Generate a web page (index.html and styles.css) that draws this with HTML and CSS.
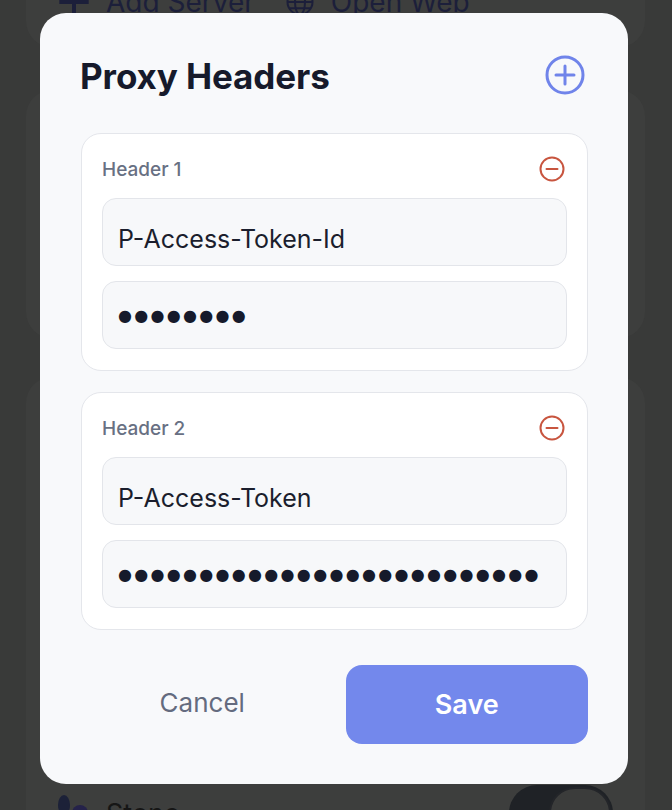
FILE: index.html
```html
<!DOCTYPE html>
<html lang="en">
<head>
    <meta charset="UTF-8">
    <meta name="viewport" content="width=device-width, initial-scale=1.0">
    <title>Proxy Headers</title>
    <link rel="stylesheet" href="styles.css">
</head>
<body>

    <!-- App behind the dialog -->
    <div class="app">
        <section class="panel panel-top">
            <div class="actions">
                <span class="action">
                    <svg width="32" height="32" viewBox="0 0 24 24"><path d="M12 1v22M1 12h22" stroke="currentColor" stroke-width="3" fill="none"/></svg>
                    Add Server
                </span>
                <span class="action">
                    <svg width="30" height="30" viewBox="0 0 24 24" fill="none" stroke="currentColor" stroke-width="1.6"><circle cx="12" cy="12" r="10"/><ellipse cx="12" cy="12" rx="4" ry="10"/><path d="M2 12h20M4 7h16M4 17h16"/></svg>
                    Open Web
                </span>
            </div>
        </section>
        <section class="panel panel-mid"></section>
        <section class="panel panel-list">
            <div class="list-row">
                <span class="row-icon"><i></i><i></i></span>
                <span class="row-name">Stone</span>
                <span class="toggle"><span class="knob"></span></span>
            </div>
        </section>
    </div>

    <!-- Dialog -->
    <div class="overlay">
        <div class="dialog">
            <div class="dialog-head">
                <h2>Proxy Headers</h2>
                <button class="icon-btn add-btn" aria-label="Add header">
                    <svg width="40" height="40" viewBox="0 0 40 40" fill="none" stroke="currentColor" stroke-width="3" stroke-linecap="round">
                        <circle cx="20" cy="20" r="18"/>
                        <path d="M20 11v18M11 20h18"/>
                    </svg>
                </button>
            </div>

            <div class="header-card">
                <div class="header-label">
                    <span>Header 1</span>
                    <button class="icon-btn remove-btn" aria-label="Remove header">
                        <svg width="26" height="26" viewBox="0 0 26 26" fill="none" stroke="currentColor" stroke-width="2" stroke-linecap="round">
                            <circle cx="13" cy="13" r="11.5"/>
                            <path d="M7.5 13h11"/>
                        </svg>
                    </button>
                </div>
                <input class="field" type="text" value="P-Access-Token-Id">
                <div class="field secret">●●●●●●●●</div>
            </div>

            <div class="header-card">
                <div class="header-label">
                    <span>Header 2</span>
                    <button class="icon-btn remove-btn" aria-label="Remove header">
                        <svg width="26" height="26" viewBox="0 0 26 26" fill="none" stroke="currentColor" stroke-width="2" stroke-linecap="round">
                            <circle cx="13" cy="13" r="11.5"/>
                            <path d="M7.5 13h11"/>
                        </svg>
                    </button>
                </div>
                <input class="field" type="text" value="P-Access-Token">
                <div class="field secret">●●●●●●●●●●●●●●●●●●●●●●●●●●</div>
            </div>

            <div class="dialog-actions">
                <button class="btn-cancel">Cancel</button>
                <button class="btn-save">Save</button>
            </div>
        </div>
    </div>

</body>
</html>
```

FILE: styles.css
```css
body {
    margin: 0;
    height: 810px;
    overflow: hidden;
    background-color: #393a39;
    font-family: Inter, "Noto Sans", sans-serif;
}

/* background app, dimmed */
.app {
    padding: 0 27px 0 26px;
}
.panel {
    background-color: #3d3e3d;
    border-radius: 26px;
}
.panel-top {
    height: 90px;
    margin-top: -43px;
    display: flex;
    align-items: flex-end;
    padding: 0 32px 28px;
    box-sizing: border-box;
}
.actions {
    display: flex;
    gap: 30px;
    color: #1c1f3a;
    font-size: 28px;
}
.action {
    display: flex;
    align-items: center;
    gap: 16px;
}
.panel-mid {
    height: 248px;
    margin-top: 43px;
}
.panel-list {
    height: 460px;
    margin-top: 39px;
    display: flex;
    flex-direction: column;
    justify-content: flex-end;
    padding: 0 32px 4px;
    box-sizing: border-box;
}
.list-row {
    display: flex;
    align-items: center;
    height: 40px;
    gap: 16px;
}
.row-icon {
    position: relative;
    width: 32px;
    height: 40px;
}
.row-icon i {
    position: absolute;
    border-radius: 50%;
    background-color: #1c2138;
}
.row-icon i:first-child {
    left: 0;
    top: 2px;
    width: 12px;
    height: 20px;
}
.row-icon i:last-child {
    left: 14px;
    top: 12px;
    width: 16px;
    height: 16px;
    background-color: #25224a;
}
.row-name {
    flex: 1;
    color: #161616;
    font-size: 27px;
}
.toggle {
    width: 104px;
    height: 56px;
    border-radius: 28px;
    background-color: #1f2226;
    display: flex;
    justify-content: flex-end;
    padding: 2px;
    box-sizing: border-box;
}
.knob {
    width: 62px;
    height: 52px;
    border-radius: 26px;
    background-color: #3b3c3b;
    border: 2px solid #232529;
    box-sizing: border-box;
}

/* dialog */
.overlay {
    position: fixed;
    inset: 0;
    padding: 13px 0 0 40px;
}
.dialog {
    width: 588px;
    box-sizing: border-box;
    background-color: #f8f9fb;
    border-radius: 26px;
    padding: 40px 40px 40px 41px;
}
.dialog-head {
    display: flex;
    justify-content: space-between;
    align-items: center;
    height: 44px;
    margin-bottom: 36px;
}
.dialog-head h2 {
    margin: 2px 0 0 -1px;
    font-size: 35px;
    font-weight: 700;
    color: #161a2b;
    letter-spacing: -0.1px;
}
.icon-btn {
    background: none;
    border: none;
    padding: 0;
    display: flex;
}
.add-btn {
    color: #7084ea;
    margin-right: 3px;
}
.remove-btn {
    color: #c8553f;
    margin-right: 2px;
}
.header-card {
    background-color: #fff;
    border: 1px solid #e4e6eb;
    border-radius: 20px;
    padding: 20px 20px 21px;
    display: flex;
    flex-direction: column;
    gap: 15px;
    margin-bottom: 21px;
}
.header-label {
    display: flex;
    justify-content: space-between;
    align-items: center;
    height: 28px;
    padding-top: 1px;
    font-size: 19px;
    font-weight: 500;
    color: #687083;
}
.field {
    height: 68px;
    box-sizing: border-box;
    background-color: #f7f8fa;
    border: 1px solid #e3e5ea;
    border-radius: 14px;
    padding: 14px 15px 0;
    font-family: inherit;
    font-size: 25px;
    color: #1b1e2d;
    outline: none;
}
.secret {
    display: flex;
    align-items: center;
    padding-top: 0;
    font-family: "DejaVu Sans", sans-serif;
    font-size: 16px;
    letter-spacing: 2.3px;
    color: #161a2b;
}
.dialog-actions {
    display: grid;
    grid-template-columns: 1fr 1fr;
    gap: 22px;
    height: 79px;
    margin-top: 35px;
}
.btn-cancel, .btn-save {
    border: none;
    font-family: inherit;
    cursor: pointer;
}
.btn-cancel {
    background: none;
    font-size: 26px;
    color: #646b7f;
    padding-bottom: 6px;
}
.btn-save {
    background-color: #7388ec;
    border-radius: 16px;
    font-size: 27px;
    font-weight: 600;
    color: #fff;
}
```
